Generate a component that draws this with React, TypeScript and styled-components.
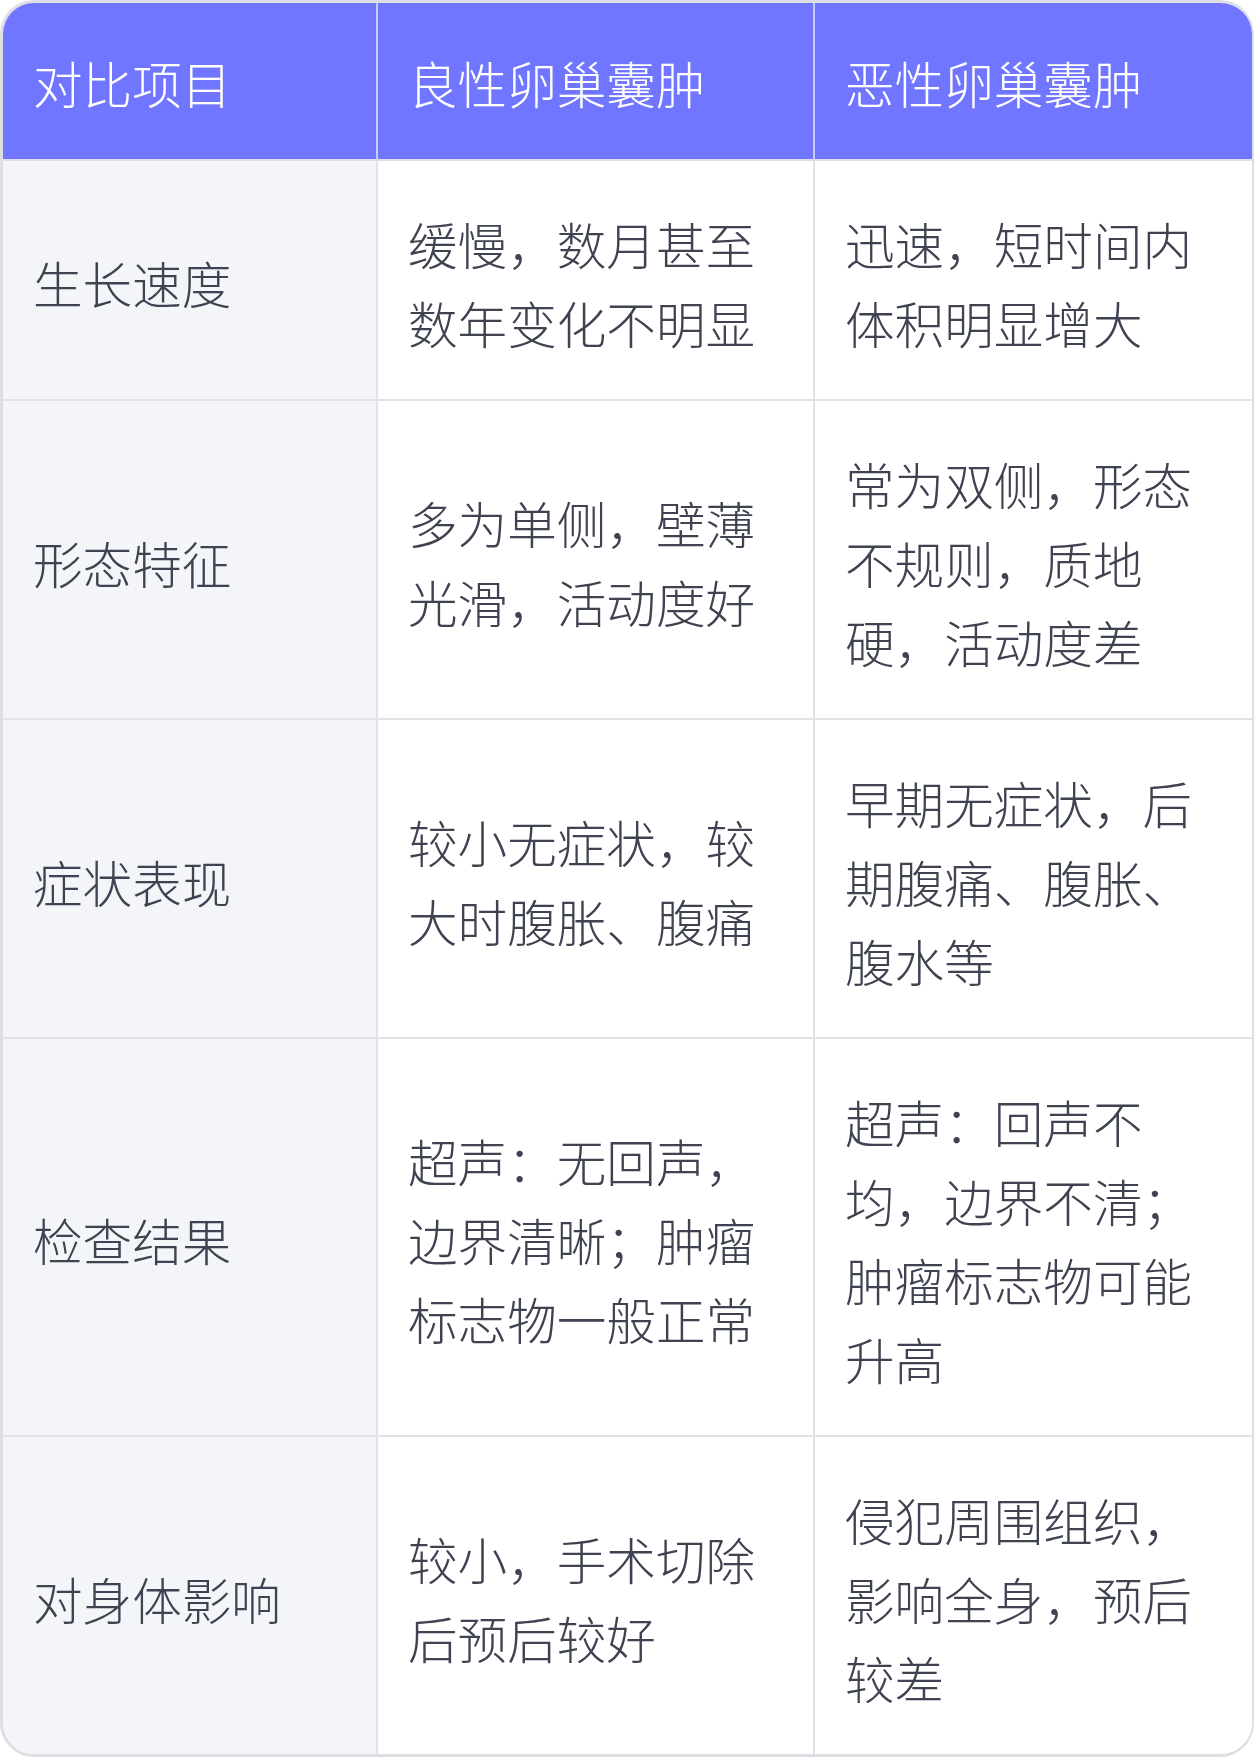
import React from 'react'
import styled, { createGlobalStyle } from 'styled-components'

type Row = {
	label: string
	benign: string
	malignant: string
}

const rows: Row[] = [
	{ label: '生长速度', benign: '缓慢，数月甚至数年变化不明显', malignant: '迅速，短时间内体积明显增大' },
	{ label: '形态特征', benign: '多为单侧，壁薄光滑，活动度好', malignant: '常为双侧，形态不规则，质地硬，活动度差' },
	{ label: '症状表现', benign: '较小无症状，较大时腹胀、腹痛', malignant: '早期无症状，后期腹痛、腹胀、腹水等' },
	{ label: '检查结果', benign: '超声：无回声，边界清晰；肿瘤标志物一般正常', malignant: '超声：回声不均，边界不清；肿瘤标志物可能升高' },
	{ label: '对身体影响', benign: '较小，手术切除后预后较好', malignant: '侵犯周围组织，影响全身，预后较差' },
]

const GlobalStyle = createGlobalStyle`
	html, body {
		margin: 0;
		padding: 0;
		background: #ffffff;
	}
	body {
		font-family: 'Noto Sans CJK SC', 'Noto Sans', sans-serif;
	}
`

const Wrapper = styled.div`
	width: 1254px;
	box-sizing: border-box;
	border-style: solid;
	border-color: #dedfe4;
	border-width: 3px 2px 3px 3px;
	border-radius: 34px;
	overflow: hidden;
	background: #ffffff;
`

const Table = styled.table`
	width: 100%;
	table-layout: fixed;
	border-collapse: separate;
	border-spacing: 0;
	font-size: 49.6px;
	font-weight: 300;
	line-height: 79px;
`

const HeadCell = styled.th`
	background: #7076ff;
	color: #ffffff;
	font-weight: 300;
	text-align: left;
	padding: 40px 28px 37px 30px;
	border-bottom: 2px solid #dedfe6;
	border-right: 2px solid #c9cbf5;
	&:last-child {
		border-right: none;
	}
`

const Cell = styled.td<{ $label?: boolean }>`
	background: ${(p) => (p.$label ? '#f4f5f9' : '#ffffff')};
	color: #3f4351;
	text-align: left;
	vertical-align: middle;
	padding: 42.5px 28px 37.5px 30px;
	border-bottom: 2px solid #e2e3e8;
	border-right: 2px solid #e2e3e8;
	&:last-child {
		border-right: none;
	}
	tr:last-child > & {
		border-bottom: none;
	}
`

export default function App() {
	return (
		<>
			<GlobalStyle />
			<Wrapper>
				<Table>
					<colgroup>
						<col style={{ width: 375 }} />
						<col style={{ width: 437 }} />
						<col style={{ width: 437 }} />
					</colgroup>
					<thead>
						<tr>
							<HeadCell>对比项目</HeadCell>
							<HeadCell>良性卵巢囊肿</HeadCell>
							<HeadCell>恶性卵巢囊肿</HeadCell>
						</tr>
					</thead>
					<tbody>
						{rows.map((r) => (
							<tr key={r.label}>
								<Cell $label>{r.label}</Cell>
								<Cell>{r.benign}</Cell>
								<Cell>{r.malignant}</Cell>
							</tr>
						))}
					</tbody>
				</Table>
			</Wrapper>
		</>
	)
}
